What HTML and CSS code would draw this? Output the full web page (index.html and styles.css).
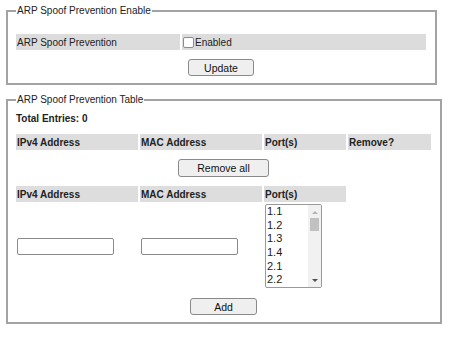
FILE: index.html
```html
<!DOCTYPE html>
<html>
<head>
<meta charset="utf-8">
<link rel="stylesheet" href="styles.css">
</head>
<body>
<fieldset class="box box-enable">
  <legend>ARP Spoof Prevention Enable</legend>
  <div class="row-enable">
    <div class="cell">ARP Spoof Prevention</div>
    <div class="cell"><label class="chk"><input type="checkbox" class="checkbox">Enabled</label></div>
  </div>
  <div class="actions actions-enable"><button class="btn btn-update">Update</button></div>
</fieldset>

<fieldset class="box box-table">
  <legend>ARP Spoof Prevention Table</legend>
  <div class="total">Total Entries: 0</div>
  <div class="grid4 head">
    <div class="hcell">IPv4 Address</div>
    <div class="hcell">MAC Address</div>
    <div class="hcell">Port(s)</div>
    <div class="hcell">Remove?</div>
  </div>
  <div class="actions"><button class="btn btn-remove">Remove all</button></div>
  <div class="grid4 head head2">
    <div class="hcell">IPv4 Address</div>
    <div class="hcell">MAC Address</div>
    <div class="hcell">Port(s)</div>
    <div></div>
  </div>
  <div class="grid4 entry">
    <div class="ecell"><input type="text" class="txt"></div>
    <div class="ecell"><input type="text" class="txt"></div>
    <div class="pcell">
      <div class="listbox">
        <div class="options">
          <div class="opt">1.1</div>
          <div class="opt">1.2</div>
          <div class="opt">1.3</div>
          <div class="opt">1.4</div>
          <div class="opt">2.1</div>
          <div class="opt">2.2</div>
        </div>
        <div class="sbar">
          <div class="arrow-up"></div>
          <div class="track"><div class="thumb"></div></div>
          <div class="arrow-down"></div>
        </div>
      </div>
    </div>
    <div></div>
  </div>
  <div class="actions actions-add"><button class="btn btn-add">Add</button></div>
</fieldset>
</body>
</html>
```

FILE: styles.css
```css
html, body {
  background: #fff;
}
body {
  margin: 0;
  padding: 5px 0 0 6px;
  font-family: "Liberation Sans", Arial, sans-serif;
  font-size: 10px;
  color: #222;
}
.box {
  border: 2px solid #a3a3a3;
  margin: 0;
  padding: 0 8px;
  box-sizing: border-box;
  min-width: 0;
}
.box legend {
  padding: 0 1px;
  line-height: 12px;
  color: #222;
}
.box-enable {
  width: 431px;
  padding-top: 17px;
  padding-bottom: 7px;
}
.box-table {
  width: 436px;
  margin-top: 9px;
  padding-top: 7px;
  padding-bottom: 7px;
}
.row-enable {
  display: grid;
  grid-template-columns: 164px 244px;
  column-gap: 2px;
  width: 410px;
}
.cell {
  background: #dcdcdc;
  height: 16px;
  padding-left: 1px;
  display: flex;
  align-items: center;
}
.chk {
  display: flex;
  align-items: center;
}
.checkbox {
  appearance: none;
  -webkit-appearance: none;
  width: 11px;
  height: 11px;
  margin: 0 1px 0 0;
  border: 1px solid #8c8c8c;
  border-radius: 2px;
  background: #fff;
  box-sizing: border-box;
}
.actions {
  display: flex;
  justify-content: center;
  width: 415px;
  margin-top: 9px;
}
.actions-enable {
  width: 410px;
}
.actions-add {
  margin-top: 10px;
}
.btn {
  height: 17px;
  padding: 0;
  margin: 0;
  border: 1px solid #8a8a8a;
  border-radius: 3px;
  background: #efefef;
  font-family: "Liberation Sans", Arial, sans-serif;
  font-size: 10.5px;
  color: #111;
  box-sizing: border-box;
}
.btn-update { width: 66px; }
.btn-remove { width: 91px; height: 18px; }
.btn-add { width: 67px; }
.total {
  font-weight: bold;
  line-height: 12px;
}
.grid4 {
  display: grid;
  grid-template-columns: 122px 122px 82px 83px;
  column-gap: 2px;
  width: 415px;
}
.head {
  margin-top: 9px;
}
.hcell {
  background: #dddddd;
  height: 16px;
  padding-left: 1px;
  font-weight: bold;
  display: flex;
  align-items: center;
  color: #222;
}
.entry {
  margin-top: 2px;
}
.ecell {
  display: flex;
  align-items: center;
  padding-left: 1px;
}
.txt {
  width: 97px;
  height: 17px;
  margin: 0;
  padding: 0 2px;
  border: 1px solid #8a8a8a;
  border-radius: 2px;
  box-sizing: border-box;
  font-size: 10px;
  background: #fff;
}
.pcell {
  padding-left: 1px;
}
.listbox {
  width: 57px;
  height: 84px;
  border: 1px solid #9a9a9a;
  border-radius: 2px;
  box-sizing: border-box;
  display: flex;
  background: #fff;
  overflow: hidden;
}
.options {
  flex: 1;
  padding-left: 1px;
  font-size: 11px;
  color: #1a1a1a;
}
.opt {
  height: 13.7px;
  line-height: 13.7px;
}
.sbar {
  width: 13px;
  background: #f1f1f1;
  display: flex;
  flex-direction: column;
  align-items: center;
}
.arrow-up {
  width: 0;
  height: 0;
  margin-top: 6px;
  border-left: 3px solid transparent;
  border-right: 3px solid transparent;
  border-bottom: 3px solid #b5b5b5;
}
.track {
  flex: 1;
  width: 100%;
  display: flex;
  justify-content: center;
}
.thumb {
  width: 9px;
  height: 13px;
  margin-top: 4px;
  background: #c1c1c1;
}
.arrow-down {
  width: 0;
  height: 0;
  margin-bottom: 5px;
  border-left: 3px solid transparent;
  border-right: 3px solid transparent;
  border-top: 3px solid #505050;
}
```
